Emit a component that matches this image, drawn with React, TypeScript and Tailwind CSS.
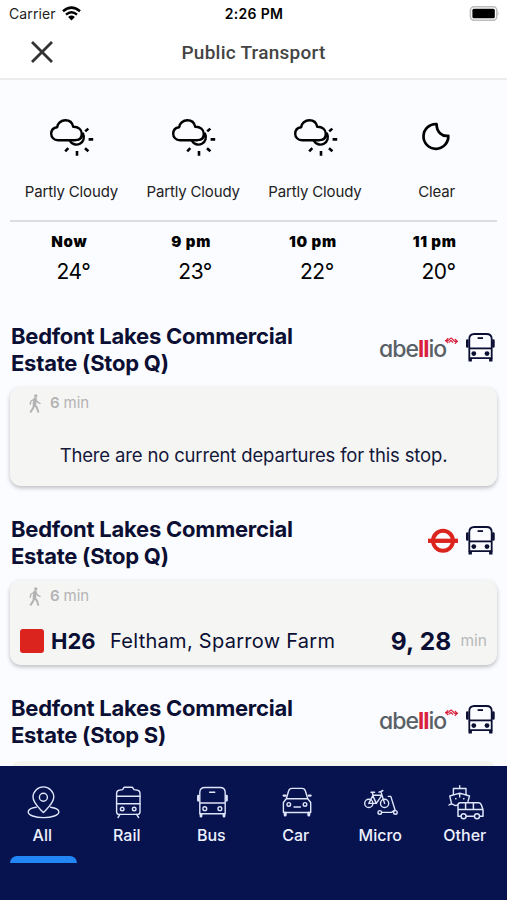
import type { ReactNode } from "react";

function PartlyCloudy() {
  return (
    <svg className="ml-[3px]" width="46" height="42" viewBox="0 0 46 42" fill="none" stroke="#000" strokeWidth="2.4" strokeLinecap="round" strokeLinejoin="round">
      <path d="M9 23.2C4.8 23.2 2.2 20.2 2.2 16.8C2.2 13.2 4.6 10.6 8.2 10.2C8.6 6.3 12.1 3.3 16.4 3.3C20.4 3.3 23.4 5.8 24.2 9.8C29.2 9.6 32.8 12.4 32.8 16.8C32.8 20.6 29.8 23.2 26 23.2Z" />
      <path d="M34 16.6A7.2 7.2 0 1 1 20.8 23.6" />
      <path d="M28 23.2C31.6 22.8 33.4 20.4 34 17" strokeWidth="1.8" />
      <path d="M36.2 14.4L39.3 11.6M39.6 22.4H44.2M36 31.2L39.4 34.3M28 34V38.8M19.3 31.2L16.2 34.4" strokeLinecap="butt" strokeWidth="2.6" />
    </svg>
  );
}

function Moon() {
  return (
    <svg width="30" height="31" viewBox="0 0 30 31" fill="none" stroke="#000" strokeWidth="2.7" strokeLinejoin="round">
      <path d="M15.6 3A12.4 12.4 0 1 0 27.3 14.8C20.8 15.7 15.5 10.8 15.6 3Z" />
    </svg>
  );
}

function BusDark() {
  return (
    <svg className="shrink-0" width="30" height="31" viewBox="0 0 30 31" fill="none" stroke="#0b0f33" strokeWidth="1.8">
      <path d="M4.3 26.2V7Q4.3 2 9.3 2H21.5Q26.7 2 26.7 7V26.2Z" />
      <path d="M4.3 16.4H26.7" />
      <path d="M12.6 6.1H18" />
      <path d="M2.3 8.6V14.4M28.4 8.6V14.4" strokeWidth="2.6" strokeLinecap="round" />
      <path d="M5.2 26.5V29.6M25.8 26.5V29.6" strokeWidth="3.4" />
      <circle cx="8.8" cy="21.6" r="2.4" fill="#0b0f33" stroke="none" />
      <circle cx="22" cy="21.6" r="2.4" fill="#0b0f33" stroke="none" />
    </svg>
  );
}

function Walker() {
  return (
    <svg width="12" height="19" viewBox="0 0 12 19" fill="none" stroke="#b3b3b3" strokeLinecap="round" strokeLinejoin="round">
      <circle cx="6.8" cy="2" r="1.7" fill="#b3b3b3" stroke="none" />
      <path d="M6 5.4L5.4 10.5" strokeWidth="3.6" />
      <path d="M5.6 5L2 7L1.2 10.2M7 5.6L8.6 8.2L11 9.4" strokeWidth="1.4" />
      <path d="M5 11L4.2 14L1.8 17.6M6 11L8 13.8L9.2 17.8" strokeWidth="2" />
    </svg>
  );
}

function Abellio() {
  return (
    <div className="flex h-[31px] w-[79px] items-start">
      <span className="w-[67px] whitespace-nowrap pt-[2px] text-[23px] font-medium leading-[30px] tracking-[-1px] text-[#596066] [font-feature-settings:'cv11']">
        abe<span className="font-bold text-[#d8213b]">ll</span>io
      </span>
      <svg className="-ml-px mt-[5px] shrink-0" width="13" height="8" viewBox="0 0 13 8" fill="none" stroke="#d8213b" strokeWidth="1.3" strokeLinejoin="round">
        <path d="M0 3.6H3.2L5.4 1.4Q6.2.8 7 1.6L9.6 4.4H13" />
        <path d="M3.2 1.2L.8 3.6L3.2 6" />
        <path d="M9.8 2L12.2 4.4L9.8 6.8M4 5.4L6 3.4L8 5.6" />
      </svg>
    </div>
  );
}

function Roundel() {
  return (
    <svg className="-mr-px" width="32" height="31" viewBox="0 0 32 31" fill="none" stroke="#dc241f">
      <circle cx="16" cy="15.8" r="10" strokeWidth="4" />
      <path d="M1 15.8H31" strokeWidth="4.3" />
    </svg>
  );
}

function NavIcon({ children }: { children: ReactNode }) {
  return (
    <svg width="36" height="36" viewBox="0 0 36 36" fill="none" stroke="#dfe5fa" strokeWidth="1.4" strokeLinecap="round" strokeLinejoin="round">
      {children}
    </svg>
  );
}

const tabs: { label: string; icon: ReactNode }[] = [
  {
    label: "All",
    icon: (
      <NavIcon>
        <path d="M19.4 27.6C16 23.6 9 18.5 9 12.1A10.4 10.2 0 0 1 29.8 12.1C29.8 18.5 22.8 23.6 19.4 27.6Z" />
        <circle cx="19.4" cy="12.2" r="4" />
        <path d="M12.3 22.2C7.6 22.8 4.2 24.6 4.2 27C4.2 30.2 11 32.6 19.4 32.6S34.9 30.2 34.9 27C34.9 24.6 31.3 22.8 26.6 22.2" />
      </NavIcon>
    ),
  },
  {
    label: "Rail",
    icon: (
      <NavIcon>
        <path d="M7.6 27V8.6Q7.6 5.4 11 5L13.6 4.6L15 2.3H23.5L25 4.6L27.6 5Q31 5.4 31 8.6V27Q31 29.4 28.6 29.4H10Q7.6 29.4 7.6 27Z" />
        <path d="M7.6 11.3H31M7.6 18.7H31M11 29.4L9 32.5M27.6 29.4L29.6 32.5" />
        <circle cx="13.2" cy="24" r="1.8" />
        <circle cx="25.2" cy="24" r="1.8" />
      </NavIcon>
    ),
  },
  {
    label: "Bus",
    icon: (
      <NavIcon>
        <path d="M6.8 28.7V7.5Q6.8 2.5 12 2.5H27Q32.2 2.5 32.2 7.5V28.7ZM6.8 18H32.2M16.6 7.3H21.8" />
        <path d="M5.2 10.8V15.6M33.7 10.8V15.6" strokeWidth="2.3" />
        <path d="M8 29.5V31.2M31 29.5V31.2" strokeWidth="2.8" />
        <circle cx="11.8" cy="23.7" r="1.9" />
        <circle cx="26.9" cy="23.7" r="1.9" />
      </NavIcon>
    ),
  },
  {
    label: "Car",
    icon: (
      <NavIcon>
        <path d="M5.4 27.5V17.5L8.3 13.8L10.6 6Q11.3 3.4 14 3.4H24Q26.7 3.4 27.4 6L29.8 13.8L32.7 17.5V27.5ZM8.3 13.8H29.8M16 22H22.5" />
        <path d="M5.6 10.6H7.6M30.7 10.6H32.7" strokeWidth="2.1" />
        <path d="M7.2 28V30M30.8 28V30" strokeWidth="3" />
        <circle cx="10.8" cy="19.4" r="1.8" />
        <circle cx="27" cy="19.4" r="1.8" />
      </NavIcon>
    ),
  },
  {
    label: "Micro",
    icon: (
      <NavIcon>
        <circle cx="6.8" cy="18.4" r="4.1" />
        <circle cx="22.6" cy="18.4" r="4.1" />
        <path d="M6.8 18.4L10.8 10.6L14.3 18.4L20 10.2H11M6.8 18.4H14.3M9 7.2H12.6M10.2 7.2L11.3 11M22.6 18.4L18.8 6.5L20.8 5.4M17 7.2L20.8 5.8" />
        <path d="M26.3 11.4H28.8L33 24.8L29.6 27.4H19.6" />
        <circle cx="17.8" cy="27.4" r="1.8" />
        <circle cx="33.4" cy="27.4" r="1.8" />
      </NavIcon>
    ),
  },
  {
    label: "Other",
    icon: (
      <svg width="38" height="36" viewBox="0 0 38 36" className="-mr-[2px]" fill="none" stroke="#dfe5fa" strokeWidth="1.4" strokeLinecap="round" strokeLinejoin="round">
        <path d="M12.7.7V3.4M6.4 9.6V3.5H19V9.6M4.4 18L2.8 11L12.7 8.2L22.5 11L21 16.4M12.7 8.2V12M8.6 13.8H9M16.6 13.8H17M2 20Q4.6 18 6.6 19.7T10.7 19.7" />
        <path d="M13.8 31.2H11V20Q11 17.7 13.4 17.7H31.8Q33.6 17.7 34.4 20L36 24.7V31.2H32.7M27.2 31.2H19.3M11 24.6H35.7M18.6 17.7V24.6M26.4 17.7V24.6" strokeWidth="1.5" />
        <circle cx="16.6" cy="31.3" r="2.5" />
        <circle cx="30" cy="31.3" r="2.5" />
      </svg>
    ),
  },
];

const forecast = [
  { sky: "Partly Cloudy", time: "Now", temp: "24°" },
  { sky: "Partly Cloudy", time: "9 pm", temp: "23°" },
  { sky: "Partly Cloudy", time: "10 pm", temp: "22°" },
  { sky: "Clear", time: "11 pm", temp: "20°" },
];

function StopHeader({ stop, logo }: { stop: string; logo: ReactNode }) {
  return (
    <div className="flex justify-between pl-[11px] pr-3">
      <h2 className="whitespace-nowrap text-[22px] font-bold leading-[27px] tracking-[-0.24px] text-[#0b0f33]">
        Bedfont Lakes Commercial
        <br />
        Estate (Stop {stop})
      </h2>
      <div className="flex items-start gap-[7px] pt-[9px]">
        {logo}
        <BusDark />
      </div>
    </div>
  );
}

function Walk() {
  return (
    <div className="flex h-[19px] items-center gap-[9px] pl-[19px] text-[#b3b3b3]">
      <Walker />
      <span className="text-[15px] tracking-[-0.1px]">
        <b className="font-semibold">6</b> min
      </span>
    </div>
  );
}

export default function App() {
  return (
    <div className="flex h-[900px] w-[507px] flex-col overflow-hidden bg-[#fbfcff] font-[Inter,sans-serif]">
      <header className="h-20 shrink-0 border-b-2 border-[#ececec] bg-white">
        <div className="grid h-7 grid-cols-3 items-center pl-[9px] pr-2 text-[14px] leading-[28px] text-[#222]">
          <div className="flex items-center gap-[6px]">
            <span className="tracking-[0.1px]">Carrier</span>
            <svg className="-mt-[2px]" width="19" height="15" viewBox="0 0 19 15" fill="none" stroke="#000" strokeWidth="2.5">
              <path d="M1 5.2Q9.5-2 18 5.2M4 8.6Q9.5 4 15 8.6" />
              <path d="M6.1 11Q9.5 8.2 12.9 11L9.5 14.4Z" fill="#000" stroke="none" />
            </svg>
          </div>
          <span className="whitespace-nowrap text-center font-semibold tracking-[0.3px] text-black">2:26 PM</span>
          <svg className="-mt-[2px] justify-self-end" width="31" height="15" viewBox="0 0 31 15">
            <rect x="2.4" y=".8" width="26.4" height="13.4" rx="3.6" fill="#fff" stroke="#bbb" strokeWidth="1.5" />
            <rect x="4.4" y="2.8" width="22.4" height="9.4" rx="1.5" />
            <path d="M29.8 5Q31.4 7.5 29.8 10Z" fill="#bbb" />
          </svg>
        </div>
        <div className="grid h-[50px] grid-cols-[84px_1fr_84px] items-center">
          <svg className="-mt-[2px] justify-self-center" width="22" height="22" viewBox="0 0 22 22" stroke="#333" strokeWidth="2.8">
            <path d="M1 1L21 21M21 1L1 21" />
          </svg>
          <h1 className="text-center font-[Roboto,sans-serif] text-[19px] font-medium tracking-[0.25px] text-[#444]">Public Transport</h1>
        </div>
      </header>

      <main className="h-[686px] shrink-0 overflow-hidden">
        <section className="mx-[10px]">
          <div className="grid h-[142px] grid-cols-4 border-b-2 border-[#dcdddf]">
            {forecast.map((f) => (
              <div key={f.time} className="flex flex-col items-center">
                <div className="flex h-[79px] items-end justify-center">
                  {f.sky === "Clear" ? <div className="mb-[7px]"><Moon /></div> : <PartlyCloudy />}
                </div>
                <span className="mt-[22px] whitespace-nowrap pl-px text-[15px] leading-[21px] tracking-[-0.15px] text-[#222]">{f.sky}</span>
              </div>
            ))}
          </div>
          <div className="grid grid-cols-4 text-center text-black">
            {forecast.map((f) => (
              <div key={f.time}>
                <div className="mt-[10px] pr-[3px] text-[15px] font-black leading-5 tracking-[0.7px]">{f.time}</div>
                <div className="mt-[7px] pl-[5px] text-[21px] leading-[26px] tracking-[-0.5px]">{f.temp}</div>
              </div>
            ))}
          </div>
        </section>

        <section className="mt-[38px]">
          <StopHeader stop="Q" logo={<Abellio />} />
          <div className="mx-[10px] mt-[10px] h-[99px] rounded-[11px] bg-[#f5f5f4] pt-[7px] shadow-[0_2px_4px_rgba(0,0,0,0.25)]">
            <Walk />
            <p className="mt-[29px] whitespace-nowrap text-center text-[18.5px] leading-[26px] tracking-[-0.16px] text-[#14183a]">There are no current departures for this stop.</p>
          </div>
        </section>

        <section className="mt-[30px]">
          <StopHeader stop="Q" logo={<Roundel />} />
          <div className="mx-[10px] mt-[10px] h-[85px] rounded-[11px] bg-[#f5f5f4] pt-[7px] shadow-[0_2px_4px_rgba(0,0,0,0.25)]">
            <Walk />
            <div className="mt-[20px] flex h-[30px] items-center whitespace-nowrap pl-[10px] pr-[10px] text-[#0b0f33]">
              <span className="h-6 w-[24px] rounded-[3px] bg-[#dc241f]" />
              <span className="ml-[7px] w-[59px] text-[22px] font-bold">H26</span>
              <span className="text-[20px] tracking-[0.28px]">Feltham, Sparrow Farm</span>
              <span className="ml-auto text-[24.5px] font-bold tracking-[0.2px]">9, 28</span>
              <span className="ml-[9px] text-[15.5px] text-[#b9b9b9]">min</span>
            </div>
          </div>
        </section>

        <section className="mt-[30px]">
          <StopHeader stop="S" logo={<Abellio />} />
          <div className="mx-[10px] mt-[12px] h-20 rounded-[11px] bg-[#f5f5f0]" />
        </section>
      </main>

      <nav className="grid h-[134px] shrink-0 grid-cols-6 bg-[#06134f] pt-[19px]">
        {tabs.map((t, i) => (
          <div key={t.label} className="flex flex-col items-center text-[#eef1ff]">
            {t.icon}
            <span className="mt-[2px] text-[16px] font-medium leading-[25px]">{t.label}</span>
            {i === 0 && <span className="ml-[2px] mt-[8px] h-[7px] w-[67px] rounded-t-[7px] bg-[#2287f5]" />}
          </div>
        ))}
      </nav>
    </div>
  );
}
